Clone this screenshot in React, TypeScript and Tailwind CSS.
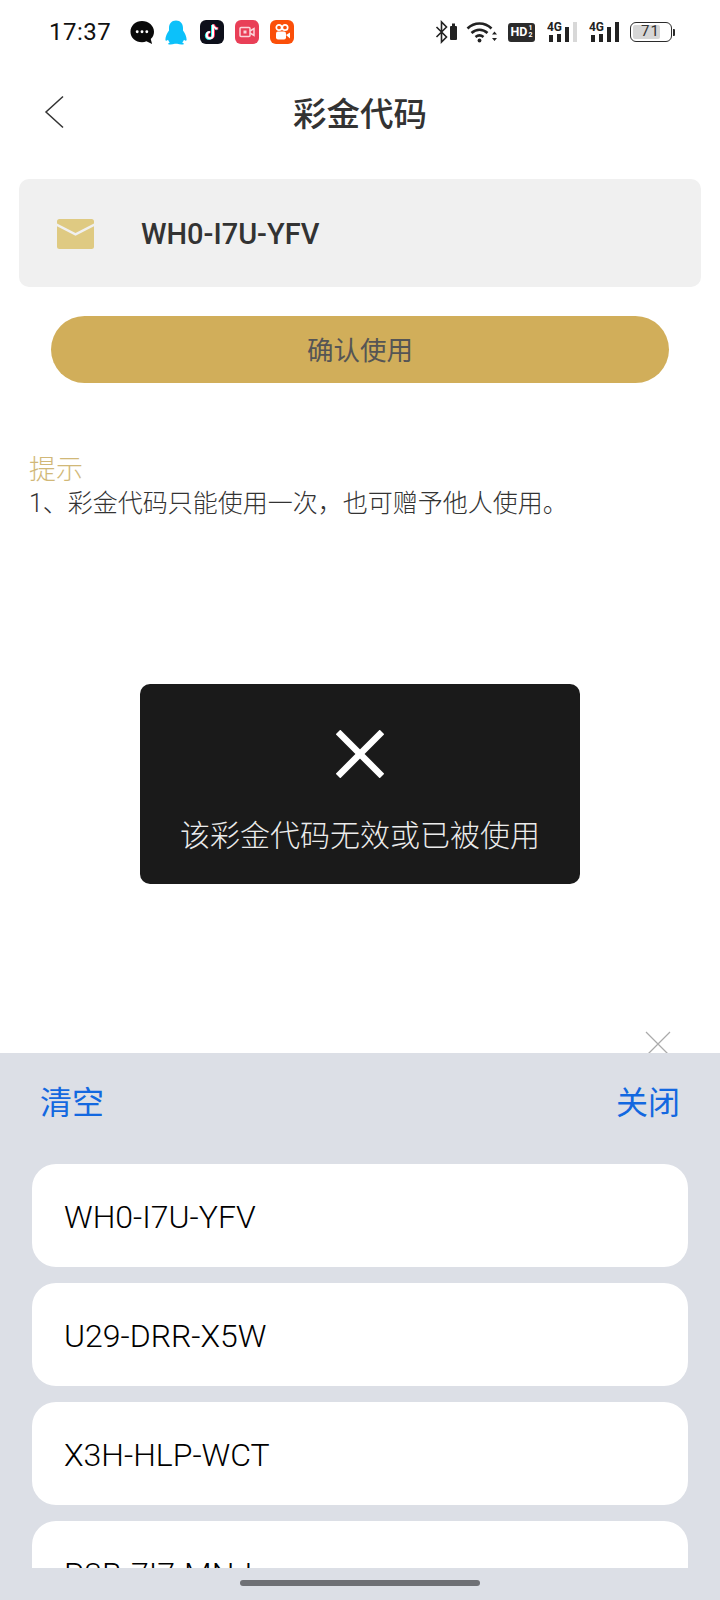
const cjk = "font-['Roboto','Noto_Sans_CJK_SC',sans-serif]";

function AppIcons() {
  return (
    <div className="flex items-center ml-[19px]">
      <svg width="24" height="25" viewBox="0 0 25 25">
        <path d="M12.5 0.5C5.8 0.5 0.5 5.4 0.5 11.6s5.3 11 12 11c1.7 0 3.2-.3 4.600-.9l5.900 2.800-1.400-5.300c2.300-2 3.400-4.600 3.400-7.600C25 5.400 19.200.5 12.500.5z" fill="#0a0a0a" />
        <circle cx="7.500" cy="11.700" r="1.500" fill="#fff" />
        <circle cx="12.500" cy="11.700" r="1.500" fill="#fff" />
        <circle cx="17.500" cy="11.700" r="1.500" fill="#fff" />
      </svg>
      <svg width="24" height="25" viewBox="0 0 24 25" className="ml-[10px]">
        <path d="M12 0.500c-4.500 0-7 3.300-7 7.500v2.500c-1.800 2.500-3.600 6-3.600 9 0 1.500 1 1.500 2.600.3.400 1.200 1 2 1.800 2.700-1.500.6-2 1.200-1.500 1.700 1 .5 4 .5 6.500-.4h2.400c2.500.9 5.500.9 6.500.4.500-.5 0-1.100-1.500-1.700.8-.7 1.400-1.500 1.800-2.700 1.600 1.200 2.600 1.200 2.600-.3 0-3-1.800-6.500-3.600-9V8c0-4.200-2.500-7.500-7-7.500z" fill="#0cc1fa" />
      </svg>
      <div className="ml-[12px] w-[24px] h-[24px] rounded-[6px] bg-[#0d0f1a] flex items-center justify-center">
        <svg width="16" height="18" viewBox="0 0 16 18" fill="none">
          <path d="M9 1.500v10.700a3.100 3.100 0 1 1-3.100-3.100M9 1.500c.3 2.500 2 4 4.500 4.200" stroke="#25f4ee" strokeWidth="2.400" transform="translate(-.8 .4)" />
          <path d="M9 1.500v10.700a3.100 3.100 0 1 1-3.100-3.100M9 1.500c.3 2.500 2 4 4.500 4.200" stroke="#fe2c55" strokeWidth="2.400" transform="translate(.8 -.2)" />
          <path d="M9 1.500v10.700a3.100 3.100 0 1 1-3.100-3.100M9 1.500c.3 2.500 2 4 4.500 4.200" stroke="#fff" strokeWidth="2" />
        </svg>
      </div>
      <div className="ml-[11px] w-[24px] h-[24px] rounded-[6px] bg-[#e93f57] flex items-center justify-center">
        <svg width="16" height="12" viewBox="0 0 16 12" fill="none" stroke="#fbd5da" strokeWidth="1.500">
          <rect x="1" y="1.500" width="10" height="9" rx="1" />
          <rect x="4.500" y="4.500" width="3" height="3" fill="#fbd5da" stroke="none" />
          <path d="M11 5l4-2.500v7L11 7" />
        </svg>
      </div>
      <div className="ml-[11px] w-[24px] h-[24px] rounded-[6px] bg-[#fb4f09] flex items-center justify-center">
        <svg width="18" height="18" viewBox="0 0 18 18" fill="none">
          <circle cx="6" cy="4.500" r="2.700" stroke="#fff" strokeWidth="1.700" />
          <circle cx="12" cy="4.500" r="2.700" stroke="#fff" strokeWidth="1.700" />
          <rect x="3" y="8.500" width="10" height="8" rx="2" fill="#fff" />
          <path d="M13 12l4-2.500v6z" fill="#fff" />
        </svg>
      </div>
    </div>
  );
}

function Signal({ dim }: { dim?: boolean }) {
  return (
    <svg width="32" height="22" viewBox="0 0 32 22">
      <text x="0" y="10" fontSize="12" fontWeight="700" fontFamily="Roboto" textLength="15" lengthAdjust="spacingAndGlyphs" fill="#222">4G</text>
      <rect x="2" y="14" width="4" height="7" fill="#222" />
      <rect x="10" y="13" width="4" height="8" fill="#222" />
      <rect x="18" y="6" width="4" height="15" fill="#222" />
      <rect x="26" y="1" width="4" height="20" fill={dim ? '#d8d8d8' : '#222'} />
    </svg>
  );
}

function StatusIcons() {
  return (
    <div className="flex items-center">
      <svg width="24" height="24" viewBox="0 0 24 24" fill="none">
        <path d="M1.500 7l10 10-5 5V2l5 5-10 10" stroke="#222" strokeWidth="1.600" />
        <rect x="15" y="6" width="7" height="14" rx="1" fill="#222" />
        <rect x="17" y="3.500" width="3" height="3" fill="#222" />
      </svg>
      <svg width="32" height="22" viewBox="0 0 32 22" fill="none" stroke="#222" strokeWidth="2.600" className="ml-[7px]">
        <path d="M1.500 7.500c7-6.700 17-6.700 24 0" />
        <path d="M5.500 12c4.800-4.400 11.200-4.400 16 0" />
        <path d="M9.500 16c2.700-2.100 5.300-2.100 8 0" />
        <circle cx="13.500" cy="19.500" r="1.900" fill="#222" stroke="none" />
        <path d="M26 13.500l2.500-3 2.500 3zM26 17l2.500 3 2.500-3z" fill="#222" stroke="none" />
      </svg>
      <div className="ml-[10px] w-[27px] h-[19px] rounded-[3px] bg-[#2b2b2b] flex items-center justify-center gap-[1px] text-white font-['Roboto',sans-serif] font-bold">
        <span className="text-[12.500px] leading-none">HD</span>
        <span className="flex flex-col text-[7px] leading-[7px]">
          <span>1</span>
          <span>2</span>
        </span>
      </div>
      <div className="ml-[12px]">
        <Signal dim />
      </div>
      <div className="ml-[10px]">
        <Signal />
      </div>
      <div className="ml-[9px] flex items-center">
        <div className="w-[42px] h-[20px] rounded-[6px] border-[1.500px] border-[#2b2b2b] p-[2px] flex">
          <div className="relative h-full w-[27px] rounded-[2px] bg-[#d6d6d6]">
            <span className="absolute left-[8px] top-[-2px] text-[15px] leading-[17px] tracking-[1px] text-[#333] font-['Roboto',sans-serif]">71</span>
          </div>
        </div>
        <div className="ml-[1px] w-[2px] h-[7px] rounded-r-[1px] bg-[#2b2b2b]" />
      </div>
    </div>
  );
}

const codes = ['WH0-I7U-YFV', 'U29-DRR-X5W', 'X3H-HLP-WCT', 'R3B-7I7-MNJ'];

export default function App() {
  return (
    <div className={`relative h-[1600px] w-[720px] overflow-hidden bg-white flex flex-col ${cjk}`}>
      <div className="h-[64px] flex items-center justify-between pl-[49px] pr-[45px]">
        <div className="flex items-center">
          <span className="text-[24px] leading-none text-[#111] tracking-[0.5px]">17:37</span>
          <AppIcons />
        </div>
        <StatusIcons />
      </div>

      <div className="relative h-[100px] flex items-center justify-center">
        <svg width="20" height="34" viewBox="0 0 20 34" fill="none" stroke="#333" strokeWidth="1.500" className="absolute left-[44px] top-[31px]">
          <path d="M19 1.500L2 17l17 15.500" />
        </svg>
        <h1 className="text-[33.500px] leading-none font-medium text-[#333] mt-[1px]">彩金代码</h1>
      </div>

      <div className="mx-[19px] mt-[15px] h-[108px] rounded-[10px] bg-[#f0f0f0] flex items-center pl-[38px]">
        <svg width="37" height="30" viewBox="0 0 37 30" className="mt-[1px]">
          <path d="M2.500 0h32A2.500 2.500 0 0 1 37 2.500v1.900L18.500 14 0 4.400V2.500A2.500 2.500 0 0 1 2.500 0z" fill="#dfca82" />
          <path d="M0 7.200l18.500 9.600L37 7.200v20.300a2.500 2.500 0 0 1-2.500 2.500h-32A2.500 2.500 0 0 1 0 27.500z" fill="#dfca82" />
        </svg>
        <span className="ml-[47px] pt-[3px] text-[29px] leading-none font-[470] text-[#333]">WH0-I7U-YFV</span>
      </div>

      <button className="mx-[51px] mt-[29px] h-[67px] rounded-full bg-[#d1ae5a] text-[26.500px] text-[#555] pt-[3px]">确认使用</button>

      <div className="mt-[71px] pl-[29px]">
        <p className="text-[27px] leading-[32px] font-light text-[#d1b878]">提示</p>
        <p className="text-[25px] leading-[32px] font-light text-[#333] pt-[2px]">1、彩金代码只能使用一次，也可赠予他人使用。</p>
      </div>

      <div className="absolute left-[140px] top-[684px] w-[440px] h-[200px] rounded-[10px] bg-[#1a1a1a] flex flex-col items-center">
        <svg width="48" height="48" viewBox="0 0 48 48" className="mt-[46px]" stroke="#fff" strokeWidth="6.500" fill="none">
          <path d="M2 2l44 44M46 2L2 46" />
        </svg>
        <p className="mt-[38px] text-[30px] leading-[40px] text-[#ececec] font-light">该彩金代码无效或已被使用</p>
      </div>

      <svg width="26" height="26" viewBox="0 0 26 26" className="absolute left-[645px] top-[1031px]" stroke="#aaa" strokeWidth="1.200" fill="none">
        <path d="M1 1l24 24M25 1L1 25" />
      </svg>

      <div className="absolute inset-x-0 top-[1053px] bottom-0 bg-[#dcdfe6]">
        <div className="flex justify-between pl-[40px] pr-[40px] pt-[29px] text-[32px] leading-[42px] text-[#1368e0]">
          <span>清空</span>
          <span>关闭</span>
        </div>
        <div className="mx-[32px] mt-[40px] h-[404px] overflow-hidden flex flex-col gap-[16px]">
          {codes.map((code) => (
            <div key={code} className="shrink-0 h-[103px] rounded-[24px] bg-white flex items-center pl-[32px] pt-[2px] text-[32px] font-[350] text-black">
              {code}
            </div>
          ))}
        </div>
        <div className="mx-auto mt-[12px] w-[240px] h-[6px] rounded-full bg-[#6e7075]" />
      </div>
    </div>
  );
}
